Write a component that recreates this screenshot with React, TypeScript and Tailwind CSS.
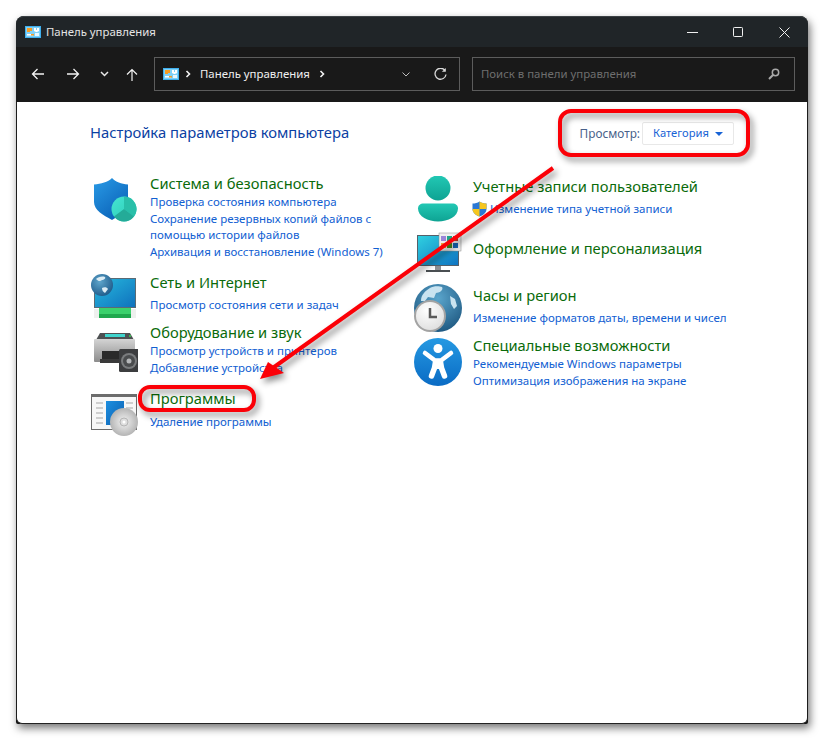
import React from "react";

const CpIcon = () => (
  <svg width="16" height="12" viewBox="0 0 16 12">
    <rect x="0" y="0" width="16" height="12" fill="#3fb0ee" />
    <rect x="1" y="1" width="14" height="10" fill="#7fd0f7" />
    <path d="M2 2h5v3H5v1H2z" fill="#f59b23" />
    <path d="M9 2h2v2h1V2h2v3l-2 1h-1L9 5z" fill="#fff" />
    <rect x="2" y="8" width="6" height="1.5" fill="#fff" />
    <rect x="6" y="8" width="3" height="1.5" fill="#f59b23" />
    <rect x="10" y="7" width="4" height="3" fill="#e8f6fd" />
  </svg>
);

const Chev = ({ className }: { className?: string }) => (
  <svg width="6" height="8" viewBox="0 0 6 8" className={className}>
    <path d="M1.500 1l3 3-3 3" fill="none" stroke="#f2f2f2" strokeWidth="1.600" />
  </svg>
);

const ShieldIcon = () => (
  <svg width="48" height="48" viewBox="0 0 48 48">
    <defs>
      <linearGradient id="sh" x1="0" y1="0" x2="0.7" y2="1">
        <stop offset="0" stopColor="#2a9be6" />
        <stop offset="1" stopColor="#0a62b8" />
      </linearGradient>
      <linearGradient id="tc" x1="0" y1="0" x2="1" y2="1">
        <stop offset="0" stopColor="#45e6d2" />
        <stop offset="1" stopColor="#2cc9b4" />
      </linearGradient>
    </defs>
    <path d="M22 2c4 4 9 6 16 6.500V26c0 8-7 13-16 18C13 39 4 34 4 26V8.500C11 8 18 6 22 2z" fill="url(#sh)" />
    <circle cx="34" cy="33" r="12.500" fill="url(#tc)" />
    <path d="M34 33V20.500A12.500 12.500 0 0 1 44 40.500z" fill="#29bfa9" />
    <path d="M34 33l10 7.500A12.500 12.500 0 0 1 24 40.500z" fill="#24ab98" />
  </svg>
);

const NetworkIcon = () => (
  <svg width="48" height="48" viewBox="0 0 48 48">
    <defs>
      <linearGradient id="mn" x1="0" y1="0" x2="1" y2="1">
        <stop offset="0" stopColor="#27b9dd" />
        <stop offset="1" stopColor="#0f71bd" />
      </linearGradient>
      <radialGradient id="gl" cx="0.4" cy="0.35" r="0.8">
        <stop offset="0" stopColor="#5fa6cc" />
        <stop offset="1" stopColor="#154f80" />
      </radialGradient>
    </defs>
    <rect x="4" y="6" width="42" height="30" fill="#5a6a74" />
    <rect x="5" y="7" width="40" height="28" fill="url(#mn)" />
    <rect x="4" y="37" width="42" height="9" fill="#eef0ee" />
    <rect x="9" y="36" width="32" height="10" fill="#3bd16c" />
    <rect x="9" y="42" width="32" height="4" fill="#20a84e" />
    <circle cx="12" cy="13" r="11" fill="url(#gl)" />
    <path d="M6 7c2-2 6-3 9-2 1 1-1 3-3 3-2 2-4 1-6-1zM12 16c2-1 5-1 6 1l-3 4c-2-1-3-3-3-5z" fill="#dcecf4" />
  </svg>
);

const PrinterIcon = () => (
  <svg width="48" height="48" viewBox="0 0 48 48">
    <defs>
      <linearGradient id="pr" x1="0" y1="0" x2="0" y2="1">
        <stop offset="0" stopColor="#d4d4d4" />
        <stop offset="1" stopColor="#8c8c8c" />
      </linearGradient>
    </defs>
    <path d="M10 2h30l4 7H6z" fill="#4d5052" />
    <rect x="15" y="3" width="20" height="3" fill="#3fd3cc" />
    <circle cx="40" cy="5" r="1" fill="#39d353" />
    <rect x="4" y="8" width="41" height="23" rx="1" fill="url(#pr)" />
    <rect x="12" y="20" width="30" height="8" fill="#2a2a2a" />
    <rect x="10" y="28" width="32" height="4" fill="#3a3a3a" />
    <rect x="29" y="18" width="20" height="23" rx="1.500" fill="#3c3d3f" />
    <circle cx="39" cy="30" r="8" fill="#7a7c7e" />
    <circle cx="39" cy="30" r="6" fill="#4a4c4e" />
    <circle cx="39" cy="30" r="2.500" fill="#b5b7b9" />
  </svg>
);

const ProgramsIcon = () => (
  <svg width="48" height="48" viewBox="0 0 48 48">
    <defs>
      <linearGradient id="bl" x1="0" y1="0" x2="1" y2="1">
        <stop offset="0" stopColor="#1d8fe0" />
        <stop offset="1" stopColor="#0c5fb0" />
      </linearGradient>
      <radialGradient id="cd" cx="0.5" cy="0.5" r="0.6">
        <stop offset="0" stopColor="#f3f3f3" />
        <stop offset="1" stopColor="#a8a8a8" />
      </radialGradient>
    </defs>
    <rect x="1" y="2" width="46" height="36" fill="#6c6c6c" />
    <rect x="2" y="5" width="44" height="32" fill="#f7f7f7" />
    <path d="M6 11h7M6 16h7M6 21h7M6 26h7M6 31h7M36 11h7M36 16h7M36 21h6" stroke="#a6a6a6" strokeWidth="1.200" />
    <rect x="16" y="9" width="18" height="24" fill="url(#bl)" />
    <circle cx="34" cy="30" r="14" fill="url(#cd)" />
    <circle cx="34" cy="30" r="4" fill="#dedede" stroke="#b5b5b5" />
    <circle cx="34" cy="30" r="1.500" fill="#fff" />
  </svg>
);

const UserIcon = () => (
  <svg width="48" height="48" viewBox="0 0 48 48">
    <defs>
      <linearGradient id="us" x1="0" y1="0" x2="0" y2="1">
        <stop offset="0" stopColor="#22c8b4" />
        <stop offset="1" stopColor="#0ea393" />
      </linearGradient>
    </defs>
    <circle cx="24" cy="12" r="12.500" fill="url(#us)" />
    <path d="M10 27.500h28c4 0 6 2 6 5 0 8-10 13-20 13S4 40.500 4 32.500c0-3 2-5 6-5z" fill="url(#us)" />
  </svg>
);

const AppearanceIcon = () => (
  <svg width="48" height="48" viewBox="0 0 48 48">
    <defs>
      <linearGradient id="ap" x1="0" y1="0" x2="1" y2="1">
        <stop offset="0" stopColor="#2fd0e0" />
        <stop offset="1" stopColor="#0f74c2" />
      </linearGradient>
    </defs>
    <rect x="3" y="3" width="42" height="31" fill="#566069" />
    <rect x="4" y="4" width="40" height="29" fill="url(#ap)" />
    <rect x="21" y="34" width="6" height="4" fill="#8c9094" />
    <rect x="12" y="38" width="24" height="2" fill="#4a4f52" />
    <rect x="25" y="1" width="22" height="18" fill="#efefef" stroke="#8a8a8a" strokeWidth="0.500" />
    <rect x="27" y="4" width="5" height="5" fill="#9a86d8" />
    <rect x="33" y="4" width="5" height="5" fill="#1fa589" />
    <rect x="39" y="4" width="5" height="5" fill="#c0392b" />
    <rect x="27" y="11" width="5" height="5" fill="#e8a33d" />
    <rect x="33" y="11" width="5" height="5" fill="#4a8a1c" />
    <rect x="39" y="11" width="5" height="5" fill="#1667b8" />
  </svg>
);

const ClockIcon = () => (
  <svg width="48" height="48" viewBox="0 0 48 48">
    <defs>
      <radialGradient id="cg" cx="0.5" cy="0.3" r="0.8">
        <stop offset="0" stopColor="#5aa5cc" />
        <stop offset="1" stopColor="#174f78" />
      </radialGradient>
      <radialGradient id="cf" cx="0.4" cy="0.3" r="0.9">
        <stop offset="0" stopColor="#ffffff" />
        <stop offset="1" stopColor="#d8d8d8" />
      </radialGradient>
    </defs>
    <circle cx="24" cy="24" r="24" fill="url(#cg)" />
    <path d="M16 4c3-2 9-2 12-1 2 3-3 6-6 6l-2 5-6-1-3 4-4 0c0-6 4-10 9-13zM36 12l5 3 2 7-3 3-3-5z" fill="#c9e3f0" />
    <circle cx="16" cy="32" r="16" fill="#a3a3a3" />
    <circle cx="16" cy="32" r="14" fill="url(#cf)" />
    <path d="M16 24v9h7" fill="none" stroke="#5a5a5a" strokeWidth="2.500" />
  </svg>
);

const AccessIcon = () => (
  <svg width="48" height="48" viewBox="0 0 48 48">
    <defs>
      <linearGradient id="ac" x1="0" y1="0" x2="0" y2="1">
        <stop offset="0" stopColor="#2599e2" />
        <stop offset="1" stopColor="#0a6bc4" />
      </linearGradient>
    </defs>
    <circle cx="24" cy="24" r="24" fill="url(#ac)" />
    <circle cx="24" cy="10.500" r="4.500" fill="#fff" />
    <path d="M11 15l10 7.500h6L37 15" fill="none" stroke="#fff" strokeWidth="4.500" strokeLinecap="round" strokeLinejoin="round" />
    <path d="M21.500 24l-1 6-3 8M26.500 24l1 6 3 8" fill="none" stroke="#fff" strokeWidth="5.500" strokeLinecap="round" />
    <rect x="20" y="21" width="8" height="10" fill="#fff" />
  </svg>
);

const UacShield = () => (
  <svg width="15" height="16" viewBox="0 0 15 16" className="-ml-[1px] mr-[3px] shrink-0">
    <path d="M7.500 0.500C9.500 2 12 2.500 14.500 2.500V8c0 3.500-3 6-7 7.500-4-1.500-7-4-7-7.500V2.500C3 2.500 5.500 2 7.500 0.500z" fill="#2b78d4" />
    <path d="M7.500 0.500C9.500 2 12 2.500 14.500 2.500V8H7.500z" fill="#f6c61e" />
    <path d="M7.500 8H0.500c0 3.500 3 6 7 7.500z" fill="#f6c61e" />
  </svg>
);

type ItemProps = {
  h: string;
  iconClass: string;
  icon: React.ReactNode;
  title: string;
  textWidth?: string;
  linksClass?: string;
  links: React.ReactNode[];
};

const Item = ({ h, iconClass, icon, title, textWidth, linksClass, links }: ItemProps) => (
  <div className={`flex items-start ${h}`}>
    <div className={`w-[48px] shrink-0 ${iconClass}`}>{icon}</div>
    <div className={`ml-[12px] shrink-0 ${textWidth ?? "w-[233px]"}`}>
      <div className="h-[21px] whitespace-nowrap text-[14.7px] leading-[20px] text-[#0a6b0a]">{title}</div>
      <div className={`flex flex-col text-[11.5px] leading-[16.5px] text-[#1160d2] ${linksClass ?? ""}`}>
        {links.map((l, i) => (
          <div key={i}>{l}</div>
        ))}
      </div>
    </div>
  </div>
);

export default function App() {
  return (
    <div className="relative h-[741px] w-[824px] overflow-hidden bg-white pl-[16px] pt-[16px] font-['Noto_Sans','Open_Sans',sans-serif]">
      <div className="flex h-[708px] w-[792px] flex-col rounded-t-[8px] rounded-b-[2px] bg-[#141414] shadow-[2px_4px_9px_rgba(0,0,0,0.55)]">
        {/* title bar */}
        <div className="flex h-[31px] shrink-0 items-center rounded-t-[8px] border-t border-[#3a4044] bg-[#202528]">
          <div className="ml-[9px] flex items-center">
            <CpIcon />
          </div>
          <span className="ml-[5px] text-[11.4px] text-[#e4e4e4]">Панель управления</span>
          <div className="ml-auto flex pr-[1px]">
            <div className="flex h-[30px] w-[45px] items-center justify-center">
              <svg width="11" height="11" viewBox="0 0 11 11"><path d="M0 5.500h11" stroke="#f0f0f0" strokeWidth="1" /></svg>
            </div>
            <div className="flex h-[30px] w-[46px] items-center justify-center">
              <svg width="10" height="10" viewBox="0 0 10 10"><rect x="0.500" y="0.500" width="9" height="9" rx="0.800" fill="none" stroke="#f0f0f0" /></svg>
            </div>
            <div className="flex h-[30px] w-[46px] items-center justify-center">
              <svg width="11" height="11" viewBox="0 0 11 11"><path d="M0.500 0.500l10 10M10.500 0.500l-10 10" stroke="#f0f0f0" strokeWidth="1" /></svg>
            </div>
          </div>
        </div>
        {/* toolbar */}
        <div className="flex h-[55px] shrink-0 items-center bg-[#191919] pb-[1px] pl-[5px]">
          <div className="flex w-[34px] justify-center">
            <svg width="14" height="12" viewBox="0 0 14 12"><path d="M13 6H1.500M6.500 1l-5 5 5 5" fill="none" stroke="#f2f2f2" strokeWidth="1.300" /></svg>
          </div>
          <div className="flex w-[36px] justify-center">
            <svg width="14" height="12" viewBox="0 0 14 12"><path d="M1 6h11.500M7.500 1l5 5-5 5" fill="none" stroke="#f2f2f2" strokeWidth="1.300" /></svg>
          </div>
          <div className="flex w-[27px] justify-center">
            <svg width="9" height="6" viewBox="0 0 9 6"><path d="M1 1l3.500 3.500L8 1" fill="none" stroke="#e8e8e8" strokeWidth="1.500" /></svg>
          </div>
          <div className="flex w-[28px] justify-center">
            <svg width="12" height="13" viewBox="0 0 12 13"><path d="M6 13V1.500M1 6.500l5-5 5 5" fill="none" stroke="#f2f2f2" strokeWidth="1.200" /></svg>
          </div>
          <div className="ml-[8px] flex h-[34px] w-[306px] items-center border border-[#5c5c5c] pl-[8px] pr-[12px]">
            <CpIcon />
            <Chev className="ml-[6px]" />
            <span className="ml-[9px] text-[11.4px] text-[#f0f0f0]">Панель управления</span>
            <Chev className="ml-[9px]" />
            <svg width="8" height="5" viewBox="0 0 8 5" className="ml-[77px]"><path d="M0.500 0.500L4 4l3.500-3.500" fill="none" stroke="#bdbdbd" strokeWidth="1" /></svg>
            <svg width="13" height="13" viewBox="0 0 13 13" className="ml-auto">
              <path d="M11 2.500A5.500 5.500 0 1 0 12 6.500" fill="none" stroke="#d8d8d8" strokeWidth="1.300" />
              <path d="M7.800 3.800h4V0z" fill="#d8d8d8" />
            </svg>
          </div>
          <div className="ml-[12px] flex h-[34px] w-[323px] items-center border border-[#5c5c5c] pl-[8px] pr-[14px]">
            <span className="text-[11.4px] text-[#6e6e6e]">Поиск в панели управления</span>
            <svg width="12" height="12" viewBox="0 0 12 12" className="ml-auto">
              <circle cx="7.500" cy="4.500" r="3.200" fill="none" stroke="#a8a8a8" strokeWidth="1.500" />
              <path d="M5.200 6.800L1 11" stroke="#a8a8a8" strokeWidth="2" />
            </svg>
          </div>
        </div>
        {/* content */}
        <div className="flex-1 rounded-b-[6px] border-x border-b border-x-[#1c1c1c] border-b-[#222] bg-white">
          <div className="mt-[20px] flex h-[23px] items-center justify-between pl-[73px] pr-[73px]">
            <span className="-translate-y-[1px] text-[14.8px] text-[#0b3fa3]">Настройка параметров компьютера</span>
            <div className="flex items-center">
              <span className="text-[11.8px] text-[#48618a]">Просмотр:</span>
              <div className="ml-[2px] flex h-[23px] w-[92px] items-center rounded-[2px] border border-[#e8e8e8] pl-[10px]">
                <span className="text-[11.2px] text-[#1763d6]">Категория</span>
                <span className="ml-[6px] h-0 w-0 border-x-[4px] border-t-[4px] border-x-transparent border-t-[#1763d6]" />
              </div>
            </div>
          </div>
          <div className="flex items-start pl-[73px]">
            <div className="w-[323px] shrink-0 pt-[28px]">
              <Item h="h-[99px]" iconClass="mt-[3px]" icon={<ShieldIcon />} title="Система и безопасность"
                links={["Проверка состояния компьютера", "Сохранение резервных копий файлов с помощью истории файлов", "Архивация и восстановление (Windows 7)"]} />
              <Item h="h-[50px]" iconClass="mt-[0px]" icon={<NetworkIcon />} title="Сеть и Интернет" linksClass="mt-[4px]"
                links={["Просмотр состояния сети и задач"]} />
              <Item h="h-[66px]" iconClass="mt-[9px]" icon={<PrinterIcon />} title="Оборудование и звук"
                links={["Просмотр устройств и принтеров", "Добавление устройства"]} />
              <Item h="h-[50px]" iconClass="mt-[4px]" icon={<ProgramsIcon />} title="Программы" linksClass="mt-[5px]"
                links={["Удаление программы"]} />
            </div>
            <div className="flex-1 pt-[31px]">
              <Item h="h-[62px]" textWidth="w-[270px]" iconClass="mt-[0px] translate-x-[1px]" icon={<UserIcon />} title="Учетные записи пользователей" linksClass="mt-[4px]"
                links={[<span className="flex items-center"><UacShield /><span>Изменение типа учетной записи</span></span>]} />
              <Item h="h-[47px]" textWidth="w-[270px]" iconClass="-mt-[6px] translate-x-[1px]" icon={<AppearanceIcon />} title="Оформление и персонализация" links={[]} />
              <Item h="h-[50px]" textWidth="w-[270px]" iconClass="-mt-[1px] translate-x-[1px]" icon={<ClockIcon />} title="Часы и регион" linksClass="mt-[4px]"
                links={["Изменение форматов даты, времени и чисел"]} />
              <Item h="h-[50px]" textWidth="w-[270px]" iconClass="mt-[3px] translate-x-[1px]" icon={<AccessIcon />} title="Специальные возможности"
                links={["Рекомендуемые Windows параметры", "Оптимизация изображения на экране"]} />
            </div>
          </div>
        </div>
      </div>
      {/* annotations */}
      <svg width="824" height="741" viewBox="0 0 824 741" className="pointer-events-none absolute left-0 top-0 drop-shadow-[3px_4px_3px_rgba(0,0,0,0.45)]">
        <rect x="560" y="111" width="188" height="44" rx="11" fill="none" stroke="#fb0007" strokeWidth="4" />
        <rect x="140" y="387" width="114" height="23" rx="10" fill="none" stroke="#fb0007" strokeWidth="4" />
        <path d="M553 168L270 370" fill="none" stroke="#fb0007" strokeWidth="4" />
        <path d="M260 379L268 362L284 373z" fill="#fb0007" />
      </svg>
    </div>
  );
}
